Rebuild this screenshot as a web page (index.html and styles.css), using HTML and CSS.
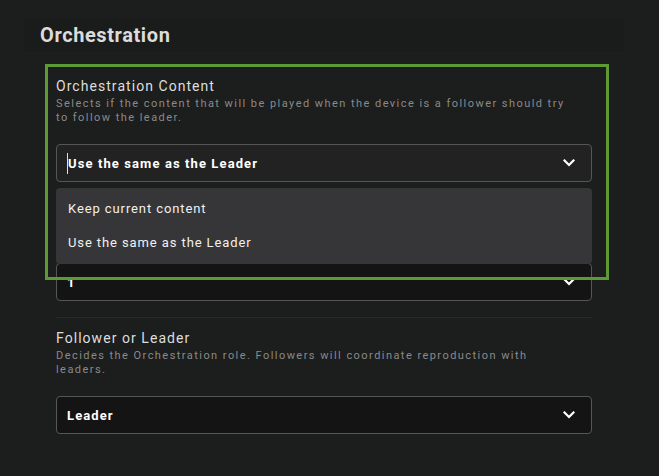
FILE: index.html
```html
<!DOCTYPE html>
<html>
<head>
<meta charset="utf-8">
<link rel="stylesheet" href="styles.css">
</head>
<body>
<div class="page">
  <div class="section-header"><h2 class="section-title">Orchestration</h2></div>
  <div class="section-body">
    <div class="field">
      <div class="field-label">Orchestration Content</div>
      <div class="field-desc">Selects if the content that will be played when the device is a follower should try to follow the leader.</div>
      <div class="select select-focused">
        <span class="select-value"><span class="caret"></span>Use the same as the Leader</span>
        <svg class="chevron" width="12" height="8" viewBox="0 0 12 8"><polyline points="1.5,1.5 6,6 10.5,1.5" fill="none" stroke="#fff" stroke-width="2.2" stroke-linecap="square"/></svg>
      </div>
    </div>
    <div class="field">
      <div class="covered">
        <div class="field-label">Orchestration Group</div>
        <div class="field-desc">Devices in the same group are orchestrated together.</div>
      </div>
      <div class="select">
        <span class="select-value">1</span>
        <svg class="chevron" width="12" height="8" viewBox="0 0 12 8"><polyline points="1.5,1.5 6,6 10.5,1.5" fill="none" stroke="#fff" stroke-width="2.2" stroke-linecap="square"/></svg>
      </div>
    </div>
    <div class="field field-last">
      <div class="field-label">Follower or Leader</div>
      <div class="field-desc">Decides the Orchestration role. Followers will coordinate reproduction with leaders.</div>
      <div class="select">
        <span class="select-value">Leader</span>
        <svg class="chevron" width="12" height="8" viewBox="0 0 12 8"><polyline points="1.5,1.5 6,6 10.5,1.5" fill="none" stroke="#fff" stroke-width="2.2" stroke-linecap="square"/></svg>
      </div>
    </div>
  </div>
  <div class="menu">
    <div class="menu-option">Keep current content</div>
    <div class="menu-option">Use the same as the Leader</div>
  </div>
  <div class="highlight"></div>
</div>
</body>
</html>
```

FILE: styles.css
```css
html, body {
  margin: 0;
  padding: 0;
  background: #1c1d1d;
  font-family: Roboto, "Liberation Sans", sans-serif;
}
.page {
  position: relative;
  width: 659px;
  height: 476px;
  padding: 18px 35px 0 24px;
  box-sizing: border-box;
  overflow: hidden;
}
.section-header {
  height: 34px;
  background: #1a1b1b;
  padding-left: 16px;
  display: flex;
  align-items: center;
}
.section-title {
  margin: 0;
  font-size: 20px;
  font-weight: 700;
  color: #dcdcdc;
  letter-spacing: 0.6px;
}
.section-body {
  padding: 14px 32px 0 32px;
}
.field {
  padding: 11px 0 16px 0;
  border-bottom: 1px solid #282a2a;
}
.field-last {
  border-bottom: none;
}
.covered {
  visibility: hidden;
}
.field-label {
  font-size: 14px;
  line-height: 18px;
  color: #dedede;
  letter-spacing: 1.05px;
}
.field-desc {
  margin-top: 2px;
  font-size: 11px;
  line-height: 14px;
  color: #8a8a8a;
  letter-spacing: 1.45px;
  max-width: 510px;
}
.select {
  margin-top: 19px;
  height: 38px;
  box-sizing: border-box;
  border: 1px solid #565656;
  border-radius: 4px;
  background: #141414;
  display: flex;
  align-items: center;
  justify-content: space-between;
  padding: 0 16px 0 10px;
}
.select-focused {
  background: #222222;
}
.select-value {
  font-size: 13px;
  font-weight: 700;
  color: #ffffff;
  letter-spacing: 1.1px;
  display: flex;
  align-items: center;
}
.caret {
  display: inline-block;
  width: 1px;
  height: 21px;
  background: #e0e0e0;
}
.chevron {
  display: block;
}
.menu {
  position: absolute;
  left: 56px;
  top: 188px;
  width: 536px;
  height: 76px;
  box-sizing: border-box;
  padding: 4px 0;
  background: #363638;
  border-radius: 4px;
}
.menu-option {
  height: 34px;
  line-height: 34px;
  padding-left: 12px;
  font-size: 13px;
  color: #f0f0f0;
  letter-spacing: 0.9px;
}
.highlight {
  position: absolute;
  left: 45px;
  top: 64px;
  width: 564px;
  height: 216px;
  box-sizing: border-box;
  border: 3px solid #5c9a35;
  pointer-events: none;
}
```
